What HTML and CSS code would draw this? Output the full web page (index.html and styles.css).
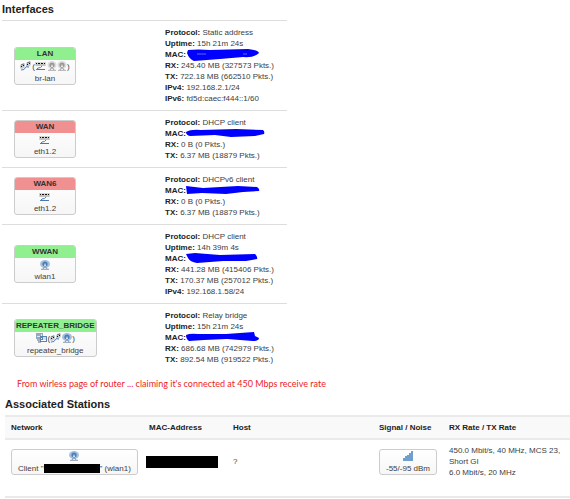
FILE: index.html
```html
<!DOCTYPE html>
<html lang="en">
<head>
    <meta charset="UTF-8">
    <title>Interfaces</title>
    <link rel="stylesheet" href="styles.css">
</head>
<body>
    <svg class="sprite" aria-hidden="true">
        <symbol id="bridge" viewBox="0 0 11 10">
            <path d="M0 5l1-2 3-1 1 1v2L4 7 1 8 0 7zM6 3l1-2 3-1 1 1v2l-1 2-3 1-1-1z" fill="#c4c8cc"/>
            <path d="M1 4l3-1M7 2l3-1" stroke="#777" fill="none"/>
            <path d="M1 5h1v1H1zM3 4h1v1H3zM7 3h1v1H7zM9 2h1v1H9z" fill="#111"/>
            <path d="M1 9q4 0 4-2t4-1" stroke="#4f83bd" fill="none"/>
        </symbol>
        <symbol id="port" viewBox="0 0 11 10">
            <path d="M0 1h11v4H0z" fill="#d5d5d2"/>
            <path d="M1 2h1v1H1zM3 2h2v1H3zM6 2h2v1H6zM9 2h1v1H9z" fill="#111"/>
            <path d="M1 4h9" stroke="#999" stroke-width=".6"/>
            <path d="M7 5q-1 2-4 2L1 9" stroke="#4f83bd" fill="none"/>
            <path d="M2 8.5h8" stroke="#4878ac"/>
        </symbol>
        <symbol id="wifi" viewBox="0 0 10 10">
            <ellipse cx="5" cy="4" rx="5" ry="4" fill="#a3c1e0"/>
            <circle cx="5" cy="4" r="2.6" fill="#4c7eb6"/>
            <path d="M5 3L3.5 7h3z" fill="#dfe7ef"/>
            <path d="M5 6L3 9M5 6l2 3" stroke="#6d8299" stroke-width=".8"/>
            <path d="M1 9.3h8" stroke="#8b9bac"/>
        </symbol>
        <symbol id="wifi-off" viewBox="0 0 10 10">
            <ellipse cx="5" cy="4" rx="4.5" ry="4" fill="#dcdcdc"/>
            <circle cx="5" cy="4" r="2.6" fill="#999"/>
            <path d="M5 3L3.5 7h3z" fill="#eee"/>
            <path d="M5 6L3 9M5 6l2 3" stroke="#888" stroke-width=".8"/>
            <path d="M1 9.3h8" stroke="#aaa"/>
        </symbol>
        <symbol id="tunnel" viewBox="0 0 11 10">
            <path d="M0 0h7v6H0z" fill="#8da7c4"/>
            <path d="M1 1h5v3H1z" fill="#dce8f4"/>
            <path d="M1 2h4M1 7h3M2 9h3" stroke="#667"/>
            <path d="M4 3h7v6H4z" fill="#5c82ac"/>
            <path d="M7 4h3v3H7z" fill="#cfe0f1"/>
            <path d="M5 5h1v1H5zM5 7h5v1H5z" fill="#fff"/>
        </symbol>
        <symbol id="signal" viewBox="0 0 10 10">
            <path d="M0 7h2v3H0zM2 5h2v5H2zM4 4h2v6H4zM6 2h2v8H6zM8 0h2v10H8z" fill="#6a99ca"/>
            <path d="M1 7v3M3 5v5M5 4v6M7 2v8M9 0v10" stroke="#84add7" stroke-width=".5"/>
        </symbol>
    </svg>

    <section class="interfaces">
        <h2>Interfaces</h2>
        <table class="iface-table">
            <tr>
                <td>
                    <div class="badge">
                        <div class="badge-head up">LAN</div>
                        <div class="icons">
                            <svg class="icon wide"><use href="#bridge"/></svg>
                            <span>(</span><svg class="icon wide"><use href="#port"/></svg>
                            <svg class="icon"><use href="#wifi-off"/></svg>
                            <svg class="icon"><use href="#wifi-off"/></svg><span>)</span>
                        </div>
                        <div>br-lan</div>
                    </div>
                </td>
                <td>
                    <b>Protocol:</b> Static address<br>
                    <b>Uptime:</b> 15h 21m 24s<br>
                    <b>MAC:</b> <svg class="scribble" viewBox="0 0 80 11"><path d="M2 1Q12 0 24 1L62 0Q72 1 73 4Q68 9 57 8L34 10 8 12Q3 10 1 4z"/><path class="gap" d="M11 5h9M57 5h4"/></svg><br>
                    <b>RX:</b> 245.40 MB (327573 Pkts.)<br>
                    <b>TX:</b> 722.18 MB (662510 Pkts.)<br>
                    <b>IPv4:</b> 192.168.2.1/24<br>
                    <b>IPv6:</b> fd5d:caec:f444::1/60
                </td>
            </tr>
            <tr>
                <td>
                    <div class="badge">
                        <div class="badge-head down">WAN</div>
                        <div class="icons"><svg class="icon wide"><use href="#port"/></svg></div>
                        <div>eth1.2</div>
                    </div>
                </td>
                <td>
                    <b>Protocol:</b> DHCP client<br>
                    <b>MAC:</b> <svg class="scribble" viewBox="0 0 80 11"><path d="M0 4Q5 1 15 2L50 1 77 2Q79 4 78 6L69 8 45 9 29 7 4 8Q0 7 0 4z"/></svg><br>
                    <b>RX:</b> 0 B (0 Pkts.)<br>
                    <b>TX:</b> 6.37 MB (18879 Pkts.)
                </td>
            </tr>
            <tr>
                <td>
                    <div class="badge">
                        <div class="badge-head down">WAN6</div>
                        <div class="icons"><svg class="icon wide"><use href="#port"/></svg></div>
                        <div>eth1.2</div>
                    </div>
                </td>
                <td>
                    <b>Protocol:</b> DHCPv6 client<br>
                    <b>MAC:</b> <svg class="scribble" viewBox="0 0 80 11"><path d="M0 1L17 3 52 1 71 2Q74 4 73 6L57 7 40 9 16 8 1 9z"/></svg><br>
                    <b>RX:</b> 0 B (0 Pkts.)<br>
                    <b>TX:</b> 6.37 MB (18879 Pkts.)
                </td>
            </tr>
            <tr>
                <td>
                    <div class="badge">
                        <div class="badge-head up">WWAN</div>
                        <div class="icons"><svg class="icon"><use href="#wifi"/></svg></div>
                        <div>wlan1</div>
                    </div>
                </td>
                <td>
                    <b>Protocol:</b> DHCP client<br>
                    <b>Uptime:</b> 14h 39m 4s<br>
                    <b>MAC:</b> <svg class="scribble" viewBox="0 0 80 11"><path d="M0 1L9 0 34 2 69 1Q72 4 71 6L60 8 37 8 11 10Q4 9 2 5z"/></svg><br>
                    <b>RX:</b> 441.28 MB (415406 Pkts.)<br>
                    <b>TX:</b> 170.37 MB (257012 Pkts.)<br>
                    <b>IPv4:</b> 192.168.1.58/24
                </td>
            </tr>
            <tr>
                <td>
                    <div class="badge">
                        <div class="badge-head up">REPEATER_BRIDGE</div>
                        <div class="icons">
                            <svg class="icon wide"><use href="#tunnel"/></svg>
                            <span>(</span><svg class="icon wide"><use href="#bridge"/></svg><svg class="icon"><use href="#wifi"/></svg><span>)</span>
                        </div>
                        <div>repeater_bridge</div>
                    </div>
                </td>
                <td>
                    <b>Protocol:</b> Relay bridge<br>
                    <b>Uptime:</b> 15h 21m 24s<br>
                    <b>MAC:</b> <svg class="scribble" viewBox="0 0 80 11"><path d="M0 3Q4 1 12 2L40 2 68 0 69 4 73 6Q73 9 67 9L41 7 18 8 3 9Q0 7 0 3z"/></svg><br>
                    <b>RX:</b> 686.68 MB (742979 Pkts.)<br>
                    <b>TX:</b> 892.54 MB (919522 Pkts.)
                </td>
            </tr>
        </table>
    </section>

    <p class="note">From wirless page of router ... claiming it's connected at 450 Mbps receive rate</p>

    <section class="stations">
        <h2>Associated Stations</h2>
        <table class="station-table">
            <thead>
                <tr>
                    <th class="col-network">Network</th>
                    <th class="col-mac">MAC-Address</th>
                    <th>Host</th>
                    <th class="col-signal">Signal / Noise</th>
                    <th class="col-rate">RX Rate / TX Rate</th>
                </tr>
            </thead>
            <tbody>
                <tr>
                    <td>
                        <div class="badge small">
                            <div class="icons"><svg class="icon"><use href="#wifi"/></svg></div>
                            <div>Client "<span class="redacted ssid"></span>" (wlan1)</div>
                        </div>
                    </td>
                    <td class="mac"><span class="redacted"></span></td>
                    <td>?</td>
                    <td>
                        <div class="badge small">
                            <div class="icons"><svg class="icon"><use href="#signal"/></svg></div>
                            <div>-55/-95 dBm</div>
                        </div>
                    </td>
                    <td>450.0 Mbit/s, 40 MHz, MCS 23, Short GI<br>6.0 Mbit/s, 20 MHz</td>
                </tr>
            </tbody>
        </table>
    </section>
</body>
</html>
```
FILE: styles.css
```css
body {
    margin: 0;
    background: #fff;
    color: #404040;
    font-family: "Liberation Sans", Arial, sans-serif;
    font-size: 8px;
    line-height: 11px;
}
.sprite {
    display: none;
}
h2 {
    margin: 0;
    color: #222;
    font-size: 11px;
    line-height: 16px;
}
b, th {
    color: #222;
    font-weight: bold;
}
table {
    width: 100%;
    border-collapse: separate;
    border-spacing: 0;
    table-layout: fixed;
}
td, th {
    padding: 0;
    text-align: left;
    vertical-align: middle;
}

/* interfaces */
.interfaces {
    width: 50%;
    padding: 1px 0 0 2px;
}
.iface-table {
    margin-top: 3px;
}
.iface-table td {
    padding: 6px 0;
    border-top: 1px solid #ddd;
    white-space: nowrap;
}
.iface-table td:first-child {
    width: 53%;
    padding-left: 12px;
}
.badge {
    display: inline-block;
    min-width: 60px;
    border: 1px solid #ccc;
    border-radius: 3px;
    background: linear-gradient(#fff, #f6f6f6);
    text-align: center;
    vertical-align: middle;
    overflow: hidden;
}
.badge-head {
    padding: 0 1px;
    color: #333;
    font-weight: bold;
    line-height: 12px;
}
.up {
    background: #90f090;
}
.down {
    background: #f09090;
}
.icons {
    display: flex;
    justify-content: center;
    align-items: center;
    height: 13px;
}
.icon {
    width: 10px;
    height: 10px;
}
.icon.wide {
    width: 11px;
    margin-right: 1px;
}
.scribble {
    width: 80px;
    height: 11px;
    margin-left: -2px;
    vertical-align: top;
    overflow: visible;
    fill: #0000fe;
}
.scribble .gap {
    stroke: #5c6cff;
}

.note {
    margin: 7px 0 0 17px;
    color: #ed1c24;
    font-family: Lato, Calibri, sans-serif;
    font-size: 9px;
}

/* associated stations */
.stations {
    padding: 7px 0 0 5px;
}
.station-table {
    margin-top: 3px;
}
.station-table th {
    padding: 5px 6px;
    border-top: 2px solid #eaeaea;
    border-bottom: 2px solid #eaeaea;
    background: #f9f9f9;
}
.station-table td {
    padding: 5px 6px 18px;
    border-bottom: 2px solid #eaeaea;
}
.col-network {
    width: 126px;
}
.col-mac {
    width: 72px;
}
.col-signal {
    width: 58px;
}
.col-rate {
    width: 115px;
}
.station-table .mac {
    padding-left: 3px;
    padding-right: 0;
}
.badge.small {
    min-width: 0;
    padding: 0 6px;
    white-space: nowrap;
}
.redacted {
    display: block;
    width: 72px;
    height: 12px;
    background: #000;
}
.redacted.ssid {
    display: inline-block;
    width: 56px;
    height: 9px;
    vertical-align: middle;
}
```
